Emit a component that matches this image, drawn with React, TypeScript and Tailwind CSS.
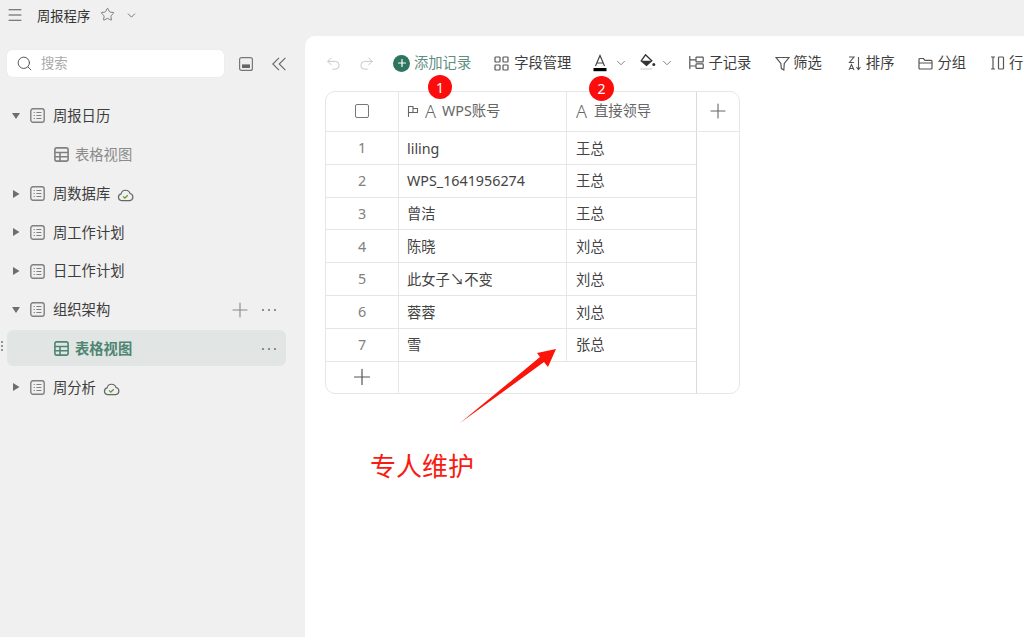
import React from "react";
import { ChevronDown, Menu, Plus, Redo2, Search, Star, Undo2 } from "lucide-react";

const ListIcon = () => (
  <svg width="15" height="15" viewBox="0 0 15 15" fill="none" stroke="#808080" strokeWidth="1.4" className="shrink-0">
    <rect x="0.8" y="0.8" width="13.4" height="13.4" rx="2.2" />
    <path d="M3.6 4.5h1.2M3.6 7.5h1.2M3.6 10.5h1.2M6.4 4.5h5M6.4 7.5h5M6.4 10.5h5" strokeWidth="1.2" />
  </svg>
);

const GridIcon = ({ color }: { color: string }) => (
  <svg width="15" height="15" viewBox="0 0 15 15" fill="none" stroke={color} strokeWidth="1.6" className="shrink-0">
    <rect x="0.9" y="0.9" width="13.2" height="13.2" rx="1.8" />
    <path d="M0.9 5.5h13.2M0.9 9.8h13.2M6 5.5v8.6" />
  </svg>
);

const Caret = ({ open }: { open?: boolean }) => (
  <svg width="10" height="10" viewBox="0 0 10 10" fill="#6e6e6e" className="shrink-0">
    {open ? <path d="M1 2h8L5 8z" /> : <path d="M2 1v8l6.5-4z" />}
  </svg>
);

const CloudOk = () => (
  <svg width="17" height="15" viewBox="0 0 17 15" fill="none" className="ml-[7px] mt-[2px] shrink-0">
    <path d="M4.6 13.6a3.4 3.4 0 0 1-.5-6.7 4.6 4.6 0 0 1 8.9-.4 3.6 3.6 0 0 1-.3 7.1z" stroke="#666" strokeWidth="1.2" />
    <path d="M6 9.4l1.8 1.7 3-2.8" stroke="#5a9e32" strokeWidth="1.3" />
  </svg>
);

const Dots = () => (
  <svg width="16" height="4" viewBox="0 0 16 4" fill="#777" className="shrink-0">
    <circle cx="2" cy="2" r="1.1" />
    <circle cx="8" cy="2" r="1.1" />
    <circle cx="14" cy="2" r="1.1" />
  </svg>
);

const TreeRow = ({ label, open, cloud, actions }: { label: string; open?: boolean; cloud?: boolean; actions?: boolean }) => (
  <div className="flex h-[38.8px] items-center pl-[11px] pr-[28px]">
    <Caret open={open} />
    <div className="ml-[9px]"><ListIcon /></div>
    <span className="ml-[8px] text-[14.3px] text-[#3d3d3d]">{label}</span>
    {cloud && <CloudOk />}
    {actions && (
      <div className="ml-auto flex items-center gap-[9px]">
        <Plus size={24} strokeWidth={1.1} color="#888" />
        <Dots />
      </div>
    )}
  </div>
);

const Tool = ({ icon, label, gap, className }: { icon: React.ReactNode; label: string; gap: string; className?: string }) => (
  <div className={`flex h-[20px] shrink-0 items-center text-[14.3px] text-[#3d3d3d] ${gap} ${className ?? ""}`}>
    {icon}
    <span>{label}</span>
  </div>
);

const people = [
  ["liling", "王总"],
  ["WPS_1641956274", "王总"],
  ["曾洁", "王总"],
  ["陈晓", "刘总"],
  ["此女子↘不变", "刘总"],
  ["蓉蓉", "刘总"],
  ["雪", "张总"],
];

const App = () => {
  return (
    <div className="relative flex h-[637px] w-[1024px] flex-col overflow-hidden bg-[#f0f0f0] font-['Noto_Sans','Noto_Sans_CJK_SC',sans-serif]">
      <div className="flex h-[36px] shrink-0 items-start pl-[6px] pt-[6px]">
        <Menu size={18} strokeWidth={1.4} color="#555" />
        <span className="ml-[13px] mt-[1px] text-[13.3px] leading-[18px] text-[#333]">周报程序</span>
        <Star size={15} strokeWidth={1.3} color="#666" className="ml-[10px] mt-[1px]" />
        <ChevronDown size={13} strokeWidth={1.6} color="#666" className="ml-[10px] mt-[3px]" />
      </div>

      <div className="flex min-h-0 flex-1">
        <aside className="relative w-[305px] shrink-0">
          <div className="flex items-center pl-[7px] pt-[14px]">
            <div className="flex h-[27px] w-[217px] items-center rounded-[5px] bg-white pl-[9px] shadow-[0_0_1px_rgba(0,0,0,0.15)]">
              <Search size={17} strokeWidth={1.4} color="#555" />
              <span className="ml-[8px] text-[13.3px] text-[#a8a8a8]">搜索</span>
            </div>
            <svg width="14" height="14" viewBox="0 0 14 14" className="ml-[15px]">
              <rect x="0.6" y="0.6" width="12.8" height="12.8" rx="2" fill="none" stroke="#777" strokeWidth="1.2" />
              <rect x="3" y="7.4" width="8" height="3.6" fill="#666" />
            </svg>
            <svg width="14" height="14" viewBox="0 0 14 14" fill="none" stroke="#666" strokeWidth="1.1" className="ml-[19px]">
              <path d="M7 .8L.8 7 7 13.2M13.4 .8L7.2 7l6.2 6.2" />
            </svg>
          </div>

          <div className="pt-[19.6px]">
            <TreeRow label="周报日历" open />
            <div className="flex h-[38.8px] items-center pl-[54px]">
              <GridIcon color="#808080" />
              <span className="ml-[6px] text-[14.3px] text-[#8a8a8a]">表格视图</span>
            </div>
            <TreeRow label="周数据库" cloud />
            <TreeRow label="周工作计划" />
            <TreeRow label="日工作计划" />
            <TreeRow label="组织架构" open actions />
            <div className="ml-[7px] mr-[19px] mt-[0.7px] mb-[2px] flex h-[36px] items-center rounded-[6px] bg-[#e1e6e4] pl-[47px] pr-[9px] pt-[1px]">
              <GridIcon color="#4f8572" />
              <span className="ml-[6px] text-[14.3px] font-bold text-[#4f8572]">表格视图</span>
              <div className="ml-auto"><Dots /></div>
            </div>
            <TreeRow label="周分析" cloud />
          </div>

          <div className="absolute left-[1px] top-[305px] grid gap-[2px]">
            <span className="h-[2px] w-[2px] rounded-full bg-[#777]" />
            <span className="h-[2px] w-[2px] rounded-full bg-[#777]" />
            <span className="h-[2px] w-[2px] rounded-full bg-[#777]" />
          </div>
        </aside>

        <main className="min-w-0 flex-1 overflow-hidden rounded-tl-[10px] bg-white pl-[20px]">
          <div className="flex h-[55px] items-start overflow-hidden pt-[17px]">
            <Undo2 size={17} strokeWidth={1.3} color="#c4c4c4" className="mt-[2px] shrink-0" />
            <Redo2 size={17} strokeWidth={1.3} color="#c4c4c4" className="ml-[16px] mt-[2px] shrink-0" />
            <div className="ml-[18px] flex h-[20px] shrink-0 items-center gap-[4px] text-[14.3px] text-[#5f8f80]">
              <span className="flex h-[17px] w-[17px] items-center justify-center rounded-full bg-[#2e7560]">
                <Plus size={12} strokeWidth={2.4} color="#fff" />
              </span>
              <span>添加记录</span>
            </div>
            <Tool
              className="ml-[23px]"
              gap="gap-[5px]"
              label="字段管理"
              icon={
                <svg width="15" height="15" viewBox="0 0 15 15" fill="none" stroke="#555" strokeWidth="1.2">
                  <rect x="1" y="1" width="5" height="5" rx="0.8" />
                  <rect x="9" y="1" width="5" height="5" rx="0.8" />
                  <rect x="1" y="9" width="5" height="5" rx="0.8" />
                  <rect x="9" y="9" width="5" height="5" rx="0.8" />
                </svg>
              }
            />
            <svg width="14" height="18" viewBox="0 0 14 18" fill="none" className="ml-[22px] mt-[1px] shrink-0">
              <path d="M2.5 12L7 1.5 11.5 12M4 9h6" stroke="#444" strokeWidth="1.2" />
              <rect x="0.5" y="14" width="13" height="3.2" fill="#000" />
            </svg>
            <ChevronDown size={14} strokeWidth={1.4} color="#666" className="ml-[6.5px] mt-[3px] shrink-0" />
            <svg width="16" height="18" viewBox="0 0 16 18" fill="none" className="ml-[12.5px] mt-[1px] shrink-0">
              <path d="M5.5 .8L11.8 6.8 6.5 11.5 1.2 6.8z" stroke="#333" strokeWidth="1.3" />
              <path d="M1.5 6.8h10l-5 4.5z" fill="#333" />
              <circle cx="13.8" cy="10.4" r="1.5" fill="#333" />
              <rect x="0.5" y="14.2" width="11.5" height="1.6" fill="#dedede" />
            </svg>
            <ChevronDown size={14} strokeWidth={1.4} color="#666" className="ml-[4px] mt-[3px] shrink-0" />
            <Tool
              className="ml-[15px]"
              gap="gap-[4px]"
              label="子记录"
              icon={
                <svg width="15" height="14" viewBox="0 0 15 14" fill="none" stroke="#555" strokeWidth="1.2">
                  <path d="M.8 0v13M.8 3.8h6M.8 10h6" />
                  <rect x="7" y="1.2" width="7.2" height="4.6" rx="0.6" />
                  <rect x="7" y="7.8" width="7.2" height="4.6" rx="0.6" />
                </svg>
              }
            />
            <Tool
              className="ml-[24px]"
              gap="gap-[3px]"
              label="筛选"
              icon={
                <svg width="15" height="15" viewBox="0 0 15 15" fill="none" stroke="#555" strokeWidth="1.2">
                  <path d="M1 1.5h13L9.3 7.4 8.8 14 6.4 12.6 5.8 7.4z" />
                </svg>
              }
            />
            <Tool
              className="ml-[26px]"
              gap="gap-[4px]"
              label="排序"
              icon={
                <svg width="14" height="15" viewBox="0 0 14 15" fill="none" stroke="#555" strokeWidth="1.1">
                  <path d="M1 1h5L1.5 6.5H6M1 14l2.5-5.5L6 14M1.7 12.5h3.6M10.5 1v12M8.5 11l2 2.5 2-2.5" />
                </svg>
              }
            />
            <Tool
              className="ml-[24px]"
              gap="gap-[4px]"
              label="分组"
              icon={
                <svg width="15" height="13" viewBox="0 0 15 13" fill="none" stroke="#555" strokeWidth="1.2">
                  <path d="M1 2.5a1 1 0 0 1 1-1h3.5l1.5 1.8h6a1 1 0 0 1 1 1v6.7a1 1 0 0 1-1 1H2a1 1 0 0 1-1-1zM1 6h13" />
                </svg>
              }
            />
            <Tool
              className="ml-[24px]"
              gap="gap-[4px]"
              label="行"
              icon={
                <svg width="15" height="14" viewBox="0 0 15 14" fill="none" stroke="#555" strokeWidth="1.2">
                  <path d="M1 1h4M1 13h4M3 1v12" />
                  <rect x="8.5" y="1" width="5" height="12" rx="0.8" />
                </svg>
              }
            />
          </div>

          <div className="w-[415px] overflow-hidden rounded-[10px] border border-[#e6e6ea] text-[14.3px] text-[#444]">
            <div className="flex h-[40px] border-b border-[#e6e6ea]">
              <div className="flex w-[73px] items-center justify-center border-r border-[#e6e6ea] pb-[1px]">
                <span className="h-[14px] w-[14px] rounded-[2px] border border-[#777]" />
              </div>
              <div className="flex w-[168px] items-center border-r border-[#e6e6ea] pb-[1px] pl-[8px] text-[#666]">
                <svg width="12" height="12" viewBox="0 0 12 12" fill="none" stroke="#666" strokeWidth="1.1">
                  <path d="M1.5 12V1.5h4.5v6H1.5M6 3.5h4.5v4H6" />
                </svg>
                <span className="ml-[6px] text-[18px] font-light leading-none">A</span>
                <span className="ml-[6px]">WPS账号</span>
              </div>
              <div className="flex w-[130px] items-center border-r border-[#d9d9e2] pb-[1px] pl-[9px] text-[#666]">
                <span className="text-[18px] font-light leading-none">A</span>
                <span className="ml-[7px]">直接领导</span>
              </div>
              <div className="flex flex-1 items-center justify-center pb-[1px]">
                <Plus size={24} strokeWidth={1.1} color="#666" />
              </div>
            </div>

            <div className="flex">
              <div className="w-[371px] shrink-0 border-r border-[#d9d9e2]">
                {people.map(([name, boss], i) => (
                  <div key={name} className="flex h-[32.8px] border-b border-[#e6e6ea]">
                    <div className="flex w-[73px] items-center justify-center border-r border-[#e6e6ea] text-[#808080]">{i + 1}</div>
                    <div className="flex w-[168px] items-center border-r border-[#e6e6ea] pl-[8px] pt-[1px]">{name}</div>
                    <div className="flex flex-1 items-center pl-[9px] pt-[1px]">{boss}</div>
                  </div>
                ))}
                <div className="flex h-[31px]">
                  <div className="flex w-[73px] items-center justify-center border-r border-[#e6e6ea]">
                    <Plus size={26} strokeWidth={1.1} color="#555" />
                  </div>
                </div>
              </div>
            </div>
          </div>
        </main>
      </div>

      {/* annotations drawn over the table */}
      <div className="absolute left-[428px] top-[75px] flex h-[24px] w-[24px] items-center justify-center rounded-full bg-[#fb0d0d] text-[14px] text-white">1</div>
      <div className="absolute left-[589px] top-[76px] flex h-[25px] w-[25px] items-center justify-center rounded-full bg-[#fb0d0d] text-[14px] text-white">2</div>
      <svg width="100" height="78" viewBox="0 0 100 78" className="absolute left-[459px] top-[347px]">
        <path d="M97 2L78 6 81 10 1 76 85 15 89 20z" fill="#fb1409" />
      </svg>
      <div className="absolute left-[370px] top-[447px] text-[26px] leading-[38px] text-[#f91a12]">专人维护</div>
    </div>
  );
};

export default App;
